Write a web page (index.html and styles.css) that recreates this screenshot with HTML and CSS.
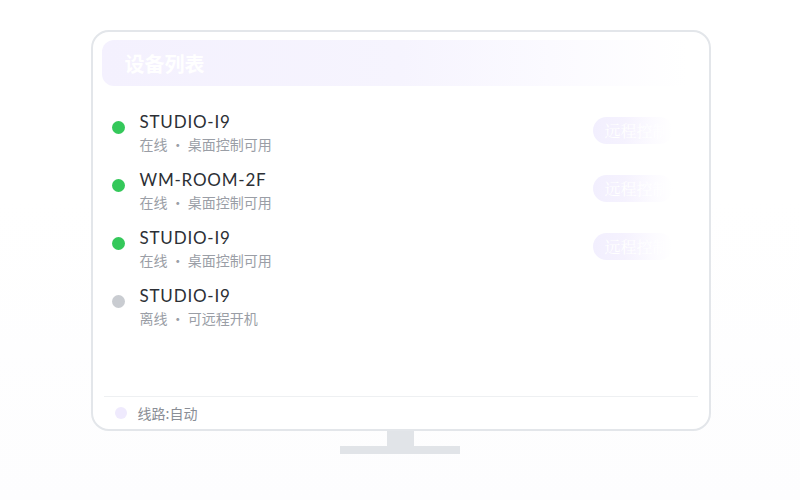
FILE: index.html
```html
<!DOCTYPE html>
<html lang="zh-CN">
<head>
<meta charset="utf-8">
<title>设备列表</title>
<link rel="stylesheet" href="styles.css">
</head>
<body>
<div class="scene">
  <div class="monitor">
    <div class="header"><span class="title">设备列表</span></div>
    <div class="list">
      <div class="row">
        <span class="dot online"></span>
        <div class="info">
          <div class="name">STUDIO-I9</div>
          <div class="sub">在线 · 桌面控制可用</div>
        </div>
        <span class="btn">远程控制</span>
      </div>
      <div class="row">
        <span class="dot online"></span>
        <div class="info">
          <div class="name">WM-ROOM-2F</div>
          <div class="sub">在线 · 桌面控制可用</div>
        </div>
        <span class="btn">远程控制</span>
      </div>
      <div class="row">
        <span class="dot online"></span>
        <div class="info">
          <div class="name">STUDIO-I9</div>
          <div class="sub">在线 · 桌面控制可用</div>
        </div>
        <span class="btn">远程控制</span>
      </div>
      <div class="row">
        <span class="dot offline"></span>
        <div class="info">
          <div class="name">STUDIO-I9</div>
          <div class="sub">离线 · 可远程开机</div>
        </div>
      </div>
    </div>
    <div class="footer">
      <span class="fdot"></span>
      <span class="ftext">线路:自动</span>
    </div>
  </div>
  <div class="neck"></div>
  <div class="base"></div>
</div>
</body>
</html>
```
FILE: styles.css
```css
html, body {
  margin: 0;
  padding: 0;
}
body {
  width: 800px;
  height: 500px;
  background: linear-gradient(180deg, #ffffff 0%, #ffffff 40%, #fdfdfe 100%);
  font-family: Lato, "Noto Sans CJK SC", sans-serif;
  overflow: hidden;
}
.scene {
  display: flex;
  flex-direction: column;
  align-items: center;
  padding-top: 30px;
}
.monitor {
  box-sizing: border-box;
  width: 620px;
  height: 401px;
  margin-left: 1px;
  border: 2px solid #e3e6ea;
  border-radius: 18px;
  background: #ffffff;
  padding: 8px 10px 0 9px;
  display: flex;
  flex-direction: column;
}
.header {
  height: 46px;
  border-radius: 12px;
  background: linear-gradient(90deg, #f4f1fe 0%, #f6f4fe 50%, #fbfaff 75%, #ffffff 98%);
  display: flex;
  align-items: center;
  padding-left: 23px;
}
.title {
  color: #ffffff;
  font-family: "Noto Sans CJK SC", sans-serif;
  font-weight: 700;
  font-size: 20px;
}
.list {
  flex: 1;
  padding-top: 25px;
  display: flex;
  flex-direction: column;
  gap: 16px;
}
.row {
  display: flex;
  align-items: flex-start;
  padding-left: 10px;
  height: 42px;
}
.dot {
  width: 13px;
  height: 13px;
  border-radius: 50%;
  margin-top: 10px;
  flex: none;
}
.online { background: #34c85a; }
.offline { background: #c9ccd1; }
.info {
  margin-left: 15px;
  flex: 1;
}
.name {
  font-size: 17px;
  line-height: 22px;
  color: #2c2f35;
  letter-spacing: 0.8px;
}
.sub {
  margin-top: 1px;
  font-family: "Noto Sans CJK SC", sans-serif;
  font-size: 14px;
  line-height: 20px;
  color: #9a9ea6;
}
.btn {
  margin-top: 6px;
  margin-right: 26px;
  width: 80px;
  height: 27px;
  border-radius: 14px;
  box-sizing: border-box;
  padding-left: 12px;
  font-family: "Noto Serif CJK SC", serif;
  font-size: 16px;
  line-height: 27px;
  color: #ffffff;
  background: linear-gradient(90deg, #f2effe 0%, #f5f2fe 40%, rgba(250,248,255,0.6) 75%, rgba(255,255,255,0) 100%);
  white-space: nowrap;
  overflow: hidden;
}
.footer {
  height: 32px;
  margin: 0 1px 0 2px;
  border-top: 1px solid #eef0f2;
  display: flex;
  align-items: center;
  padding-left: 11px;
}
.fdot {
  width: 12px;
  height: 12px;
  border-radius: 50%;
  background: #efeafd;
}
.ftext {
  margin-left: 11px;
  font-family: "Noto Sans CJK SC", sans-serif;
  font-size: 14px;
  color: #8a8e96;
}
.neck {
  width: 27px;
  height: 15px;
  background: #e1e4e8;
}
.base {
  width: 120px;
  height: 8px;
  background: #e1e4e8;
}
```
